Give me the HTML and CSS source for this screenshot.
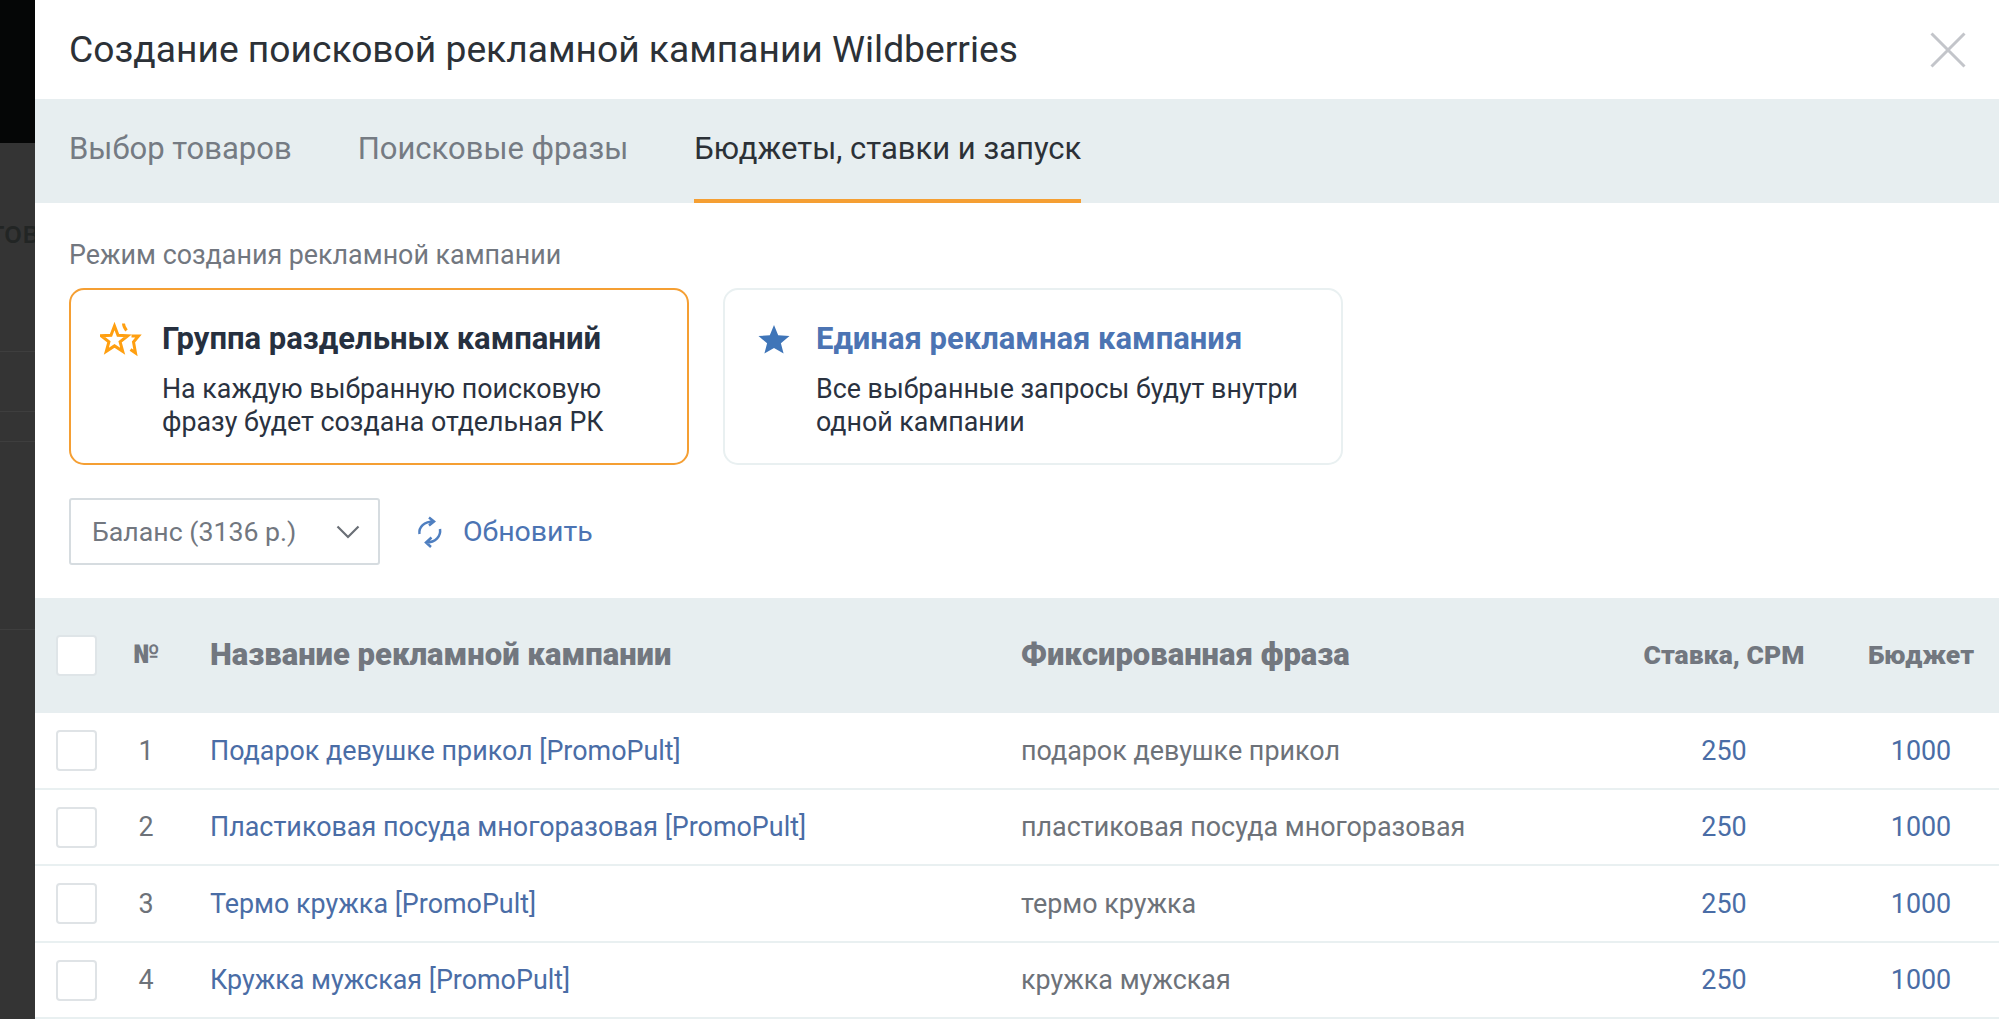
FILE: index.html
```html
<!DOCTYPE html>
<html lang="ru">
<head>
<meta charset="utf-8">
<title>Создание поисковой рекламной кампании Wildberries</title>
<link rel="stylesheet" href="styles.css">
</head>
<body>
<div class="page">
  <aside class="backdrop">
    <div class="backdrop-top"></div>
    <div class="backdrop-body">
      <div class="backdrop-text">тов</div>
      <div class="backdrop-line bl1"></div>
      <div class="backdrop-line bl2"></div>
      <div class="backdrop-line bl3"></div>
      <div class="backdrop-line bl4"></div>
    </div>
  </aside>
  <main class="modal">
    <header class="modal-head">
      <h1 class="modal-title">Создание поисковой рекламной кампании Wildberries</h1>
      <svg class="close" viewBox="0 0 36 36" width="36" height="36" aria-hidden="true"><path d="M1.5 1.5 34.500 34.500M34.500 1.500 1.500 34.500"/></svg>
    </header>
    <nav class="tabs">
      <div class="tab">Выбор товаров</div>
      <div class="tab">Поисковые фразы</div>
      <div class="tab tab-active">Бюджеты, ставки и запуск</div>
    </nav>
    <section class="settings">
      <div class="mode-label">Режим создания рекламной кампании</div>
      <div class="cards">
        <div class="card card-active">
          <svg class="card-icon" viewBox="0 0 42 38" width="42" height="38" aria-hidden="true">
            <path class="star-out" d="M14.500 4 18 13.200 27.800 13.700 20.100 19.800 22.700 29.300 14.500 23.900 6.300 29.300 8.900 19.800 1.200 13.700 11 13.200Z"/>
            <path class="star-side" d="M23.500 1.500C23.500 4.500 25 6.500 26.500 8.500M31.500 14 38.500 14 33.500 20 35.500 31 30.500 27.500"/>
          </svg>
          <div class="card-body">
            <div class="card-title">Группа раздельных кампаний</div>
            <div class="card-text">На каждую выбранную поисковую<br>фразу будет создана отдельная РК</div>
          </div>
        </div>
        <div class="card">
          <svg class="card-icon" viewBox="0 0 42 38" width="42" height="38" aria-hidden="true">
            <path class="star-fill" d="M20 3 24.200 13.300 35.500 14 26.900 21.300 29.600 31.500 20 26 10.400 31.500 13.100 21.300 4.500 14 15.800 13.300Z"/>
          </svg>
          <div class="card-body">
            <div class="card-title card-title-link">Единая рекламная кампания</div>
            <div class="card-text">Все выбранные запросы будут внутри<br>одной кампании</div>
          </div>
        </div>
      </div>
      <div class="balance-row">
        <div class="select">
          <span>Баланс (3136 р.)</span>
          <svg viewBox="0 0 24 14" width="24" height="14" aria-hidden="true"><path d="M1.500 1.500 12 12 22.500 1.500"/></svg>
        </div>
        <div class="refresh">
          <svg viewBox="0 0 28 32" width="28" height="32" aria-hidden="true">
            <path d="M1.500 18C.5 11 6 5.500 16 5.500M11 1.500 16 5.500 11 9.500M22 13C23 20 18 26.500 8 26.500M13.500 21.500 8 26.500 13 31"/>
          </svg>
          <span>Обновить</span>
        </div>
      </div>
    </section>
    <section class="table">
      <div class="row row-head">
        <div class="cell-check"><span class="checkbox checkbox-head"></span></div>
        <div class="cell-num num-head">№</div>
        <div class="cell-name name-head">Название рекламной кампании</div>
        <div class="cell-phrase name-head">Фиксированная фраза</div>
        <div class="cell-rate small-head">Ставка, СРМ</div>
        <div class="cell-budget small-head">Бюджет</div>
      </div>
      <div class="row">
        <div class="cell-check"><span class="checkbox"></span></div>
        <div class="cell-num">1</div>
        <div class="cell-name link">Подарок девушке прикол [PromoPult]</div>
        <div class="cell-phrase">подарок девушке прикол</div>
        <div class="cell-rate link">250</div>
        <div class="cell-budget link">1000</div>
      </div>
      <div class="row">
        <div class="cell-check"><span class="checkbox"></span></div>
        <div class="cell-num">2</div>
        <div class="cell-name link">Пластиковая посуда многоразовая [PromoPult]</div>
        <div class="cell-phrase">пластиковая посуда многоразовая</div>
        <div class="cell-rate link">250</div>
        <div class="cell-budget link">1000</div>
      </div>
      <div class="row">
        <div class="cell-check"><span class="checkbox"></span></div>
        <div class="cell-num">3</div>
        <div class="cell-name link">Термо кружка [PromoPult]</div>
        <div class="cell-phrase">термо кружка</div>
        <div class="cell-rate link">250</div>
        <div class="cell-budget link">1000</div>
      </div>
      <div class="row">
        <div class="cell-check"><span class="checkbox"></span></div>
        <div class="cell-num">4</div>
        <div class="cell-name link">Кружка мужская [PromoPult]</div>
        <div class="cell-phrase">кружка мужская</div>
        <div class="cell-rate link">250</div>
        <div class="cell-budget link">1000</div>
      </div>
    </section>
  </main>
</div>
</body>
</html>
```
FILE: styles.css
```css
* { box-sizing: border-box; }
html, body { margin: 0; height: 100%; overflow: hidden; background: #fff; }
body { font-family: Roboto, "Liberation Sans", sans-serif; color: #2a3240; }
.page { display: flex; height: 1019px; overflow: hidden; }

.backdrop { width: 35px; flex: none; display: flex; flex-direction: column; background: #333; overflow: hidden; }
.backdrop-top { height: 143px; background: #050606; flex: none; }
.backdrop-body { flex: 1; position: relative; background: #343434; }
.backdrop-text { position: absolute; left: -10px; top: 74px; font: 500 30px/30px "Noto Sans", sans-serif; color: #222524; }
.backdrop-line { position: absolute; left: 0; right: 0; height: 1px; background: #3e3e3e; }
.bl1 { top: 208px; }
.bl2 { top: 268px; }
.bl3 { top: 298px; }
.bl4 { top: 486px; }

.modal { flex: 1; min-width: 0; background: #fff; }
.modal-head { height: 99px; padding: 0 33px 0 34px; display: flex; align-items: center; justify-content: space-between; }
.modal-title { margin: 0; font-size: 37.200px; line-height: 1; font-weight: 400; color: #2c3137; }
.close { fill: none; stroke: #c3c5ca; stroke-width: 3; }

.tabs { height: 104px; background: #e7eef0; padding-left: 34px; display: flex; gap: 66px; }
.tab { height: 104px; line-height: 99px; font-size: 31px; color: #757b83; }
.tab-active { color: #2c3137; border-bottom: 4px solid #f59f33; }

.settings { height: 395px; padding: 36px 34px 0; }
.mode-label { font-size: 26.850px; line-height: 32px; color: #72777f; }
.cards { display: flex; gap: 34px; margin-top: 17px; }
.card { width: 620px; height: 177px; border: 2px solid #e9f0f1; border-radius: 15px; padding: 31px 20px 0 29px; display: flex; gap: 20px; }
.card-active { border-color: #f59f33; }
.card-icon { flex: none; margin-top: 1px; }
.card-body { min-width: 0; }
.card-title { font-size: 31px; line-height: 36px; font-weight: 700; color: #26303f; white-space: nowrap; }
.card-title-link { color: #4c74b3; }
.card-text { margin-top: 16px; font-size: 26.800px; line-height: 33px; color: #2a3240; white-space: nowrap; }
.star-out, .star-side { fill: none; stroke: #ff9f10; stroke-width: 3; stroke-linejoin: miter; }
.star-fill { fill: #3f75b8; }

.balance-row { display: flex; align-items: center; gap: 38px; margin-top: 33px; }
.select { width: 311px; height: 67px; border: 2px solid #d6dce0; border-radius: 3px; padding: 0 18px 0 21px; display: flex; align-items: center; justify-content: space-between; font-size: 26.700px; color: #72777f; }
.select svg { fill: none; stroke: #6a6f76; stroke-width: 2.200; }
.refresh { display: flex; align-items: center; gap: 17px; font-size: 28.500px; color: #4c74b3; }
.refresh svg { fill: none; stroke: #4f7fc0; stroke-width: 2.500; overflow: visible; }

.row { height: 76.500px; padding-top: 1px; display: grid; grid-template-columns: 21px 41px 98px 15px 811px 1fr 200px 22px 150px 3px; align-items: center; border-bottom: 2px solid #e9f0f1; font-size: 26.900px; color: #6d7279; }
.row-head { height: 115px; padding-top: 0; background: #e7eef0; border-bottom: none; }
.cell-check { grid-column: 2; display: flex; }
.cell-num { grid-column: 3; text-align: center; }
.cell-name { grid-column: 5; white-space: nowrap; }
.cell-phrase { grid-column: 6; white-space: nowrap; }
.cell-rate { grid-column: 7; text-align: center; white-space: nowrap; }
.cell-budget { grid-column: 9; text-align: center; white-space: nowrap; }
.checkbox { display: block; width: 41px; height: 41px; background: #fff; border: 2px solid #dfe3e6; border-radius: 4px; }
.checkbox-head { border-color: #dfe5e8; }
.link { color: #4a6da6; }
.num-head { font-weight: 900; font-size: 26px; color: #72777f; margin-top: -3px; }
.name-head { font-size: 31px; font-weight: 900; color: #72777f; margin-top: -3px; }
.small-head { font-size: 26.500px; font-weight: 900; color: #72777f; margin-top: -3px; }
```
